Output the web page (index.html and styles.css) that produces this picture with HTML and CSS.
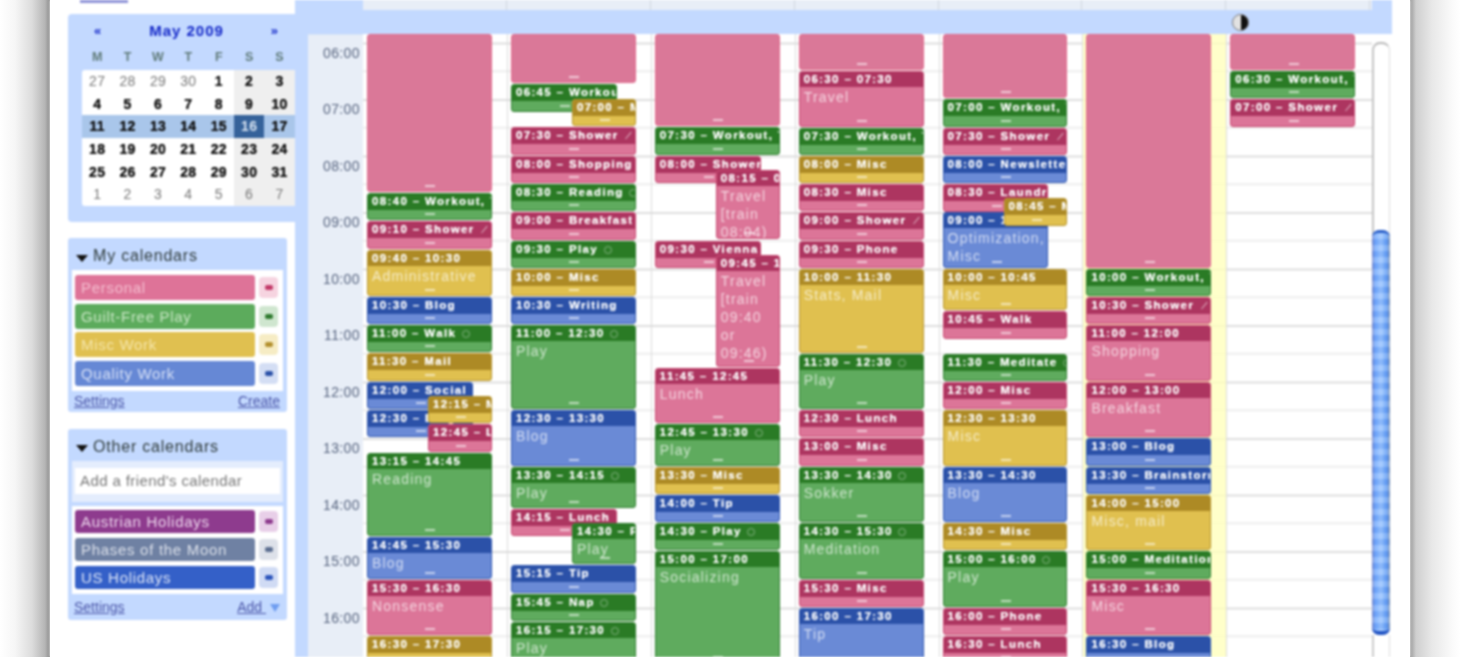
FILE: index.html
```html
<!DOCTYPE html>
<html lang="en">
<head>
<meta charset="utf-8">
<title>Calendar</title>
<link rel="stylesheet" href="styles.css">
</head>
<body>
<div class="page">
  <div class="shade-l"></div>
  <div class="window">
    <aside class="side">
      <div class="toplink"></div>
      <section class="mini">
        <div class="mini-head"><span class="arr">«</span><b>May 2009</b><span class="arr">»</span></div>
        <div class="mini-wd"><span>M</span><span>T</span><span>W</span><span>T</span><span>F</span><span>S</span><span>S</span></div>
        <div class="mini-days">
          <span class="o">27</span><span class="o">28</span><span class="o">29</span><span class="o">30</span><span>1</span><span class="we">2</span><span class="we">3</span>
          <span>4</span><span>5</span><span>6</span><span>7</span><span>8</span><span class="we">9</span><span class="we">10</span>
          <span class="wk">11</span><span class="wk">12</span><span class="wk">13</span><span class="wk">14</span><span class="wk">15</span><span class="sel">16</span><span class="wk">17</span>
          <span>18</span><span>19</span><span>20</span><span>21</span><span>22</span><span class="we">23</span><span class="we">24</span>
          <span>25</span><span>26</span><span>27</span><span>28</span><span>29</span><span class="we">30</span><span class="we">31</span>
          <span class="o">1</span><span class="o">2</span><span class="o">3</span><span class="o">4</span><span class="o">5</span><span class="o we">6</span><span class="o we">7</span>
        </div>
      </section>
      <section class="cals">
        <h3 class="cals-h"><i class="tri"></i>My calendars</h3>
        <ul class="cal-list">
          <li><span class="cal pink">Personal</span><span class="chip c-pink"></span></li>
          <li><span class="cal green">Guilt-Free Play</span><span class="chip c-green"></span></li>
          <li><span class="cal gold">Misc Work</span><span class="chip c-gold"></span></li>
          <li><span class="cal blue">Quality Work</span><span class="chip c-blue"></span></li>
        </ul>
        <div class="cals-f"><a>Settings</a><a>Create</a></div>
      </section>
      <section class="cals other">
        <h3 class="cals-h"><i class="tri"></i>Other calendars</h3>
        <div class="friend"><span>Add a friend's calendar</span></div>
        <ul class="cal-list">
          <li><span class="cal purple">Austrian Holidays</span><span class="chip c-purple"></span></li>
          <li><span class="cal slate">Phases of the Moon</span><span class="chip c-slate"></span></li>
          <li><span class="cal royal">US Holidays</span><span class="chip c-royal"></span></li>
        </ul>
        <div class="cals-f"><a>Settings</a><a class="add">Add <i class="tri-b"></i></a></div>
      </section>
    </aside>
    <main class="main">
      <div class="head-row"><div></div><div></div><div></div><div></div><div></div><div></div><div></div></div>
      <div class="allday"><div></div><div></div><div></div><div></div><div></div><div></div><div class="moon-cell"><i class="moon"></i></div></div>
      <div class="grid">
        <div class="times">
          <div>06:00</div><div>07:00</div><div>08:00</div><div>09:00</div><div>10:00</div><div>11:00</div><div>12:00</div><div>13:00</div><div>14:00</div><div>15:00</div><div>16:00</div>
        </div>
        <div class="cols">
          <div class="col">
            <div class="ev pink nohd" style="top:0;height:158px"></div>
            <div class="ev green" style="top:159px;height:27px"><p class="hd">08:40 – Workout, Y</p></div>
            <div class="ev pink" style="top:187px;height:28px"><p class="hd">09:10 – Shower <i class="pen"></i></p></div>
            <div class="ev gold" style="top:216px;height:46px"><p class="hd">09:40 – 10:30</p><p class="tt">Administrative</p></div>
            <div class="ev blue" style="top:263px;height:27px"><p class="hd">10:30 – Blog</p></div>
            <div class="ev green" style="top:291px;height:27px"><p class="hd">11:00 – Walk <i class="rep"></i></p></div>
            <div class="ev gold" style="top:319px;height:28px"><p class="hd">11:30 – Mail</p></div>
            <div class="ev blue lft" style="top:348px;height:27px"><p class="hd">12:00 – Social</p></div>
            <div class="ev blue lft" style="top:376px;height:27px"><p class="hd">12:30 – Blog</p></div>
            <div class="ev gold rgt" style="top:362px;height:27px"><p class="hd">12:15 – Misc</p></div>
            <div class="ev pink rgt" style="top:390px;height:28px"><p class="hd">12:45 – Lunch</p></div>
            <div class="ev green" style="top:419px;height:83px"><p class="hd">13:15 – 14:45</p><p class="tt">Reading</p></div>
            <div class="ev blue" style="top:503px;height:42px"><p class="hd">14:45 – 15:30</p><p class="tt">Blog</p></div>
            <div class="ev pink" style="top:546px;height:55px"><p class="hd">15:30 – 16:30</p><p class="tt">Nonsense</p></div>
            <div class="ev gold" style="top:602px;height:56px"><p class="hd">16:30 – 17:30</p></div>
          </div>
          <div class="col">
            <div class="ev pink nohd" style="top:0;height:49px"></div>
            <div class="ev green lft" style="top:50px;height:28px"><p class="hd">06:45 – Workout</p></div>
            <div class="ev gold rgt" style="top:65px;height:27px"><p class="hd">07:00 – Mail</p></div>
            <div class="ev pink" style="top:93px;height:28px"><p class="hd">07:30 – Shower <i class="pen"></i></p></div>
            <div class="ev pink" style="top:122px;height:27px"><p class="hd">08:00 – Shopping</p></div>
            <div class="ev green" style="top:150px;height:27px"><p class="hd">08:30 – Reading <i class="rep"></i></p></div>
            <div class="ev pink" style="top:178px;height:28px"><p class="hd">09:00 – Breakfast</p></div>
            <div class="ev green" style="top:207px;height:27px"><p class="hd">09:30 – Play <i class="rep"></i></p></div>
            <div class="ev gold" style="top:235px;height:27px"><p class="hd">10:00 – Misc</p></div>
            <div class="ev blue" style="top:263px;height:27px"><p class="hd">10:30 – Writing</p></div>
            <div class="ev green" style="top:291px;height:84px"><p class="hd">11:00 – 12:30 <i class="rep"></i></p><p class="tt">Play</p></div>
            <div class="ev blue" style="top:376px;height:56px"><p class="hd">12:30 – 13:30</p><p class="tt">Blog</p></div>
            <div class="ev green" style="top:433px;height:41px"><p class="hd">13:30 – 14:15 <i class="rep"></i></p><p class="tt">Play</p></div>
            <div class="ev pink lft" style="top:475px;height:27px"><p class="hd">14:15 – Lunch</p></div>
            <div class="ev green rgt" style="top:489px;height:41px"><p class="hd">14:30 – Play</p><p class="tt">Play</p></div>
            <div class="ev blue" style="top:531px;height:28px"><p class="hd">15:15 – Tip</p></div>
            <div class="ev green" style="top:560px;height:27px"><p class="hd">15:45 – Nap <i class="rep"></i></p></div>
            <div class="ev green" style="top:588px;height:70px"><p class="hd">16:15 – 17:30 <i class="rep"></i></p><p class="tt">Play</p></div>
          </div>
          <div class="col">
            <div class="ev pink nohd" style="top:0;height:92px"></div>
            <div class="ev green" style="top:93px;height:28px"><p class="hd">07:30 – Workout, Y</p></div>
            <div class="ev pink lft" style="top:122px;height:27px"><p class="hd">08:00 – Shower</p></div>
            <div class="ev pink rgt" style="top:136px;height:69px"><p class="hd">08:15 – 09:30</p><p class="tt">Travel<br>[train<br>08:04)</p></div>
            <div class="ev pink lft" style="top:207px;height:27px"><p class="hd">09:30 – Vienna</p></div>
            <div class="ev pink rgt" style="top:221px;height:112px"><p class="hd">09:45 – 11:45</p><p class="tt">Travel<br>[train<br>09:40<br>or<br>09:46)</p></div>
            <div class="ev pink" style="top:334px;height:55px"><p class="hd">11:45 – 12:45</p><p class="tt">Lunch</p></div>
            <div class="ev green" style="top:390px;height:42px"><p class="hd">12:45 – 13:30 <i class="rep"></i></p><p class="tt">Play</p></div>
            <div class="ev gold" style="top:433px;height:27px"><p class="hd">13:30 – Misc</p></div>
            <div class="ev blue" style="top:461px;height:27px"><p class="hd">14:00 – Tip</p></div>
            <div class="ev green" style="top:489px;height:27px"><p class="hd">14:30 – Play <i class="rep"></i></p></div>
            <div class="ev green" style="top:517px;height:112px"><p class="hd">15:00 – 17:00</p><p class="tt">Socializing</p></div>
          </div>
          <div class="col">
            <div class="ev pink nohd" style="top:0;height:36px"></div>
            <div class="ev pink" style="top:37px;height:56px"><p class="hd">06:30 – 07:30</p><p class="tt">Travel</p></div>
            <div class="ev green" style="top:94px;height:27px"><p class="hd">07:30 – Workout, Y</p></div>
            <div class="ev gold" style="top:122px;height:27px"><p class="hd">08:00 – Misc</p></div>
            <div class="ev pink" style="top:150px;height:27px"><p class="hd">08:30 – Misc</p></div>
            <div class="ev pink" style="top:178px;height:28px"><p class="hd">09:00 – Shower <i class="pen"></i></p></div>
            <div class="ev pink" style="top:207px;height:27px"><p class="hd">09:30 – Phone</p></div>
            <div class="ev gold" style="top:235px;height:84px"><p class="hd">10:00 – 11:30</p><p class="tt">Stats, Mail</p></div>
            <div class="ev green" style="top:320px;height:55px"><p class="hd">11:30 – 12:30 <i class="rep"></i></p><p class="tt">Play</p></div>
            <div class="ev pink" style="top:376px;height:27px"><p class="hd">12:30 – Lunch</p></div>
            <div class="ev pink" style="top:404px;height:28px"><p class="hd">13:00 – Misc</p></div>
            <div class="ev green" style="top:433px;height:55px"><p class="hd">13:30 – 14:30 <i class="rep"></i></p><p class="tt">Sokker</p></div>
            <div class="ev green" style="top:489px;height:56px"><p class="hd">14:30 – 15:30 <i class="rep"></i></p><p class="tt">Meditation</p></div>
            <div class="ev pink" style="top:546px;height:27px"><p class="hd">15:30 – Misc</p></div>
            <div class="ev blue" style="top:574px;height:84px"><p class="hd">16:00 – 17:30</p><p class="tt">Tip</p></div>
          </div>
          <div class="col">
            <div class="ev pink nohd" style="top:0;height:64px"></div>
            <div class="ev green" style="top:65px;height:28px"><p class="hd">07:00 – Workout, Y</p></div>
            <div class="ev pink" style="top:94px;height:27px"><p class="hd">07:30 – Shower <i class="pen"></i></p></div>
            <div class="ev blue" style="top:122px;height:27px"><p class="hd">08:00 – Newsletter</p></div>
            <div class="ev pink lft" style="top:150px;height:28px"><p class="hd">08:30 – Laundry</p></div>
            <div class="ev blue lft" style="top:178px;height:56px"><p class="hd">09:00 – 10:00</p><p class="tt">Optimization,<br>Misc</p></div>
            <div class="ev gold rgt" style="top:164px;height:28px"><p class="hd">08:45 – Mail</p></div>
            <div class="ev gold" style="top:235px;height:41px"><p class="hd">10:00 – 10:45</p><p class="tt">Misc</p></div>
            <div class="ev pink" style="top:277px;height:28px"><p class="hd">10:45 – Walk</p></div>
            <div class="ev green" style="top:320px;height:27px"><p class="hd">11:30 – Meditate <i class="rep"></i></p></div>
            <div class="ev pink" style="top:348px;height:27px"><p class="hd">12:00 – Misc</p></div>
            <div class="ev gold" style="top:376px;height:56px"><p class="hd">12:30 – 13:30</p><p class="tt">Misc</p></div>
            <div class="ev blue" style="top:433px;height:55px"><p class="hd">13:30 – 14:30</p><p class="tt">Blog</p></div>
            <div class="ev gold" style="top:489px;height:27px"><p class="hd">14:30 – Misc</p></div>
            <div class="ev green" style="top:517px;height:56px"><p class="hd">15:00 – 16:00 <i class="rep"></i></p><p class="tt">Play</p></div>
            <div class="ev pink" style="top:574px;height:27px"><p class="hd">16:00 – Phone</p></div>
            <div class="ev pink" style="top:602px;height:27px"><p class="hd">16:30 – Lunch</p></div>
          </div>
          <div class="col today">
            <div class="ev pink nohd" style="top:0;height:234px"></div>
            <div class="ev green" style="top:235px;height:27px"><p class="hd">10:00 – Workout, Y</p></div>
            <div class="ev pink" style="top:263px;height:27px"><p class="hd">10:30 – Shower <i class="pen"></i></p></div>
            <div class="ev pink" style="top:291px;height:56px"><p class="hd">11:00 – 12:00</p><p class="tt">Shopping</p></div>
            <div class="ev pink" style="top:348px;height:55px"><p class="hd">12:00 – 13:00</p><p class="tt">Breakfast</p></div>
            <div class="ev blue" style="top:404px;height:28px"><p class="hd">13:00 – Blog</p></div>
            <div class="ev blue" style="top:433px;height:27px"><p class="hd">13:30 – Brainstorm</p></div>
            <div class="ev gold" style="top:461px;height:55px"><p class="hd">14:00 – 15:00</p><p class="tt">Misc, mail</p></div>
            <div class="ev green" style="top:517px;height:28px"><p class="hd">15:00 – Meditation</p></div>
            <div class="ev pink" style="top:546px;height:55px"><p class="hd">15:30 – 16:30</p><p class="tt">Misc</p></div>
            <div class="ev blue" style="top:602px;height:56px"><p class="hd">16:30 – Blog</p></div>
          </div>
          <div class="col">
            <div class="ev pink nohd" style="top:0;height:36px"></div>
            <div class="ev green" style="top:37px;height:27px"><p class="hd">06:30 – Workout, Y</p></div>
            <div class="ev pink" style="top:65px;height:28px"><p class="hd">07:00 – Shower <i class="pen"></i></p></div>
          </div>
        </div>
        <div class="scroll">
          <div class="scroll-cap"></div>
          <div class="scroll-thumb"></div>
          <div class="scroll-rest"></div>
        </div>
      </div>
    </main>
    <div class="gutter"></div>
  </div>
  <div class="shade-r"></div>
</div>
</body>
</html>
```
FILE: styles.css
```css
html, body { margin: 0; padding: 0; background: #fff; height: 100%; overflow: hidden; }
* { box-sizing: border-box; }
body { font-family: "Liberation Sans", Arial, sans-serif; }
p, h3, ul { margin: 0; padding: 0; list-style: none; }

.page { display: flex; width: 1460px; height: 657px; overflow: hidden; }
.shade-l { width: 50px; background: linear-gradient(to right, #fff 0, #f6f6f6 15px, #dcdcdc 32px, #b5b5b5 45px, #8c8c8c 50px); }
.shade-r { width: 50px; background: linear-gradient(to right, #9a9a9a 0, #cfcfcf 6px, #e8e8e8 22px, #fafafa 42px, #fff 50px); }
.window { width: 1360px; display: flex; background: #fff; filter: blur(1.05px); }

/* sidebar */
.side { width: 245px; flex: none; padding-left: 18px; }
.toplink { width: 48px; height: 3px; margin-left: 12px; background: #8f93d8; }
.mini { margin-top: 11px; height: 208px; background: #c3d9ff; border-radius: 4px 0 0 4px; padding: 7px 0 0 14px; }
.mini-head { display: flex; justify-content: space-between; align-items: center; height: 18px; padding: 0 16px 0 12px; color: #1428c8; font-size: 15px; letter-spacing: 1px; }
.mini-head .arr { font-weight: bold; font-size: 13px; }
.mini-wd { display: grid; grid-template-columns: repeat(7, 30.4px); margin-top: 9px; height: 18px; align-items: center; text-align: center; font-size: 12.5px; color: #5f7a78; font-weight: bold; }
.mini-days { display: grid; grid-template-columns: repeat(7, 30.4px); grid-auto-rows: 22.7px; margin-top: 4px; background: #fff; border-radius: 3px 0 0 3px; font-size: 14px; letter-spacing: .3px; font-weight: bold; color: #111; text-align: center; line-height: 22.7px; text-shadow: 0 0 .6px #000; }
.mini-days .o { color: #777; font-weight: normal; text-shadow: none; }
.mini-days .we { background: #efefef; }
.mini-days .wk { background: #a9c6ea; }
.mini-days .sel { background: #35629a; color: #d8e4f2; text-shadow: none; }

.cals { margin-top: 16px; width: 219px; background: #c3d9ff; border-radius: 3px; padding: 0 4px; }
.cals-h { display: flex; align-items: center; gap: 5px; height: 32px; padding: 4px 0 0 4px; font-size: 16px; letter-spacing: .8px; font-weight: normal; color: #2f3b3b; white-space: nowrap; }
.tri { width: 0; height: 0; border: 6px solid transparent; border-top: 7px solid #111; border-bottom: 0; margin-top: 4px; }
.cal-list { background: #fff; padding: 5px 3px; display: flex; flex-direction: column; gap: 3.5px; }
.cal-list li { display: flex; align-items: center; gap: 4px; height: 25px; }
.cal { flex: none; width: 180px; height: 25px; border-radius: 3px; font-size: 15px; line-height: 25px; padding-left: 6px; letter-spacing: .7px; white-space: nowrap; }
.cal.pink { background: #de7398; color: #f4bfd0; }
.cal.green { background: #5cab5c; color: #c8e6c4; }
.cal.gold { background: #e0c050; color: #f5e6ac; }
.cal.blue { background: #6688d5; color: #d6e0f6; }
.cal.purple { background: #8e3b8e; color: #ecd6ec; }
.cal.slate { background: #6f81a3; color: #dbe0ea; }
.cal.royal { background: #3460c8; color: #dde5f7; }
.chip { flex: none; width: 19px; height: 21px; border-radius: 4px; display: flex; align-items: center; justify-content: center; }
.chip::after { content: ""; width: 8px; height: 5px; border-radius: 2px; }
.c-pink { background: #f6d4e0; } .c-pink::after { background: #c23a68; }
.c-green { background: #cfe6cf; } .c-green::after { background: #2f7a2f; }
.c-gold { background: #f6ecc4; } .c-gold::after { background: #b3902d; }
.c-blue { background: #d4def4; } .c-blue::after { background: #2c52a8; }
.c-purple { background: #e8cfe8; } .c-purple::after { background: #8e3b8e; }
.c-slate { background: #dde1e9; } .c-slate::after { background: #5c6e90; }
.c-royal { background: #d0dbf4; } .c-royal::after { background: #2d56bc; }
.cals-f { display: flex; justify-content: space-between; align-items: center; height: 21px; padding: 0 3px 0 2px; font-size: 14px; color: #4a55a8; }
.cals-f a { text-decoration: underline; }
.tri-b { display: inline-block; width: 0; height: 0; border: 5px solid transparent; border-top: 8px solid #6f9df0; border-bottom: 0; margin-left: 4px; }
.other { height: 191px; background: #c3d9ff; margin-top: 17px; }
.friend { background: #e4edfd; padding: 7px 3px; height: 41px; }
.friend span { display: block; background: #fff; height: 26px; line-height: 26px; padding-left: 5px; font-size: 15px; letter-spacing: .4px; color: #777; white-space: nowrap; }
.other .cal-list { margin-top: 4px; padding: 4px 3px 5px; gap: 5px; }
.other .cal-list li, .other .cal { height: 23px; line-height: 23px; }
.other .cals-f { height: 24px; margin-top: 1px; }

/* main */
.main { width: 1097px; flex: none; background: #c3d9ff; display: flex; flex-direction: column; height: 657px; overflow: hidden; }
.head-row, .allday { display: grid; grid-template-columns: repeat(7, 143.9px); width: 1009px; margin: 0 20px 0 68px; flex: none; }
.head-row { height: 10px; background: #e8eef7; }
.head-row div { border-right: 1px solid #d0d6de; }
.allday { height: 24px; }
.moon-cell { display: flex; align-items: center; padding-left: 6px; }
.moon { width: 17px; height: 17px; border-radius: 50%; background: linear-gradient(to right, #e2e2e2 0 50%, #111 50%); border: 1px solid #777; }
.grid { flex: 1; margin-left: 13px; display: flex; background: #fff; min-height: 0; }
.times { width: 55px; flex: none; background: #e8eef7; padding-top: 8.5px; border-top: 1px solid #d8e4f4; }
.times div { height: 56.5px; line-height: 19px; text-align: right; padding-right: 3px; font-size: 14px; letter-spacing: .4px; color: #56637e; }
.cols { width: 1009px; flex: none; display: grid; grid-template-columns: repeat(7, 143.9px); overflow: hidden; background-image: linear-gradient(#dedede 0 1.5px, transparent 1.5px 28.25px, #ededed 28.25px 29.25px, transparent 29.25px); background-size: 100% 56.5px; background-position: 0 8.5px; }
.col { position: relative; border-left: 1px solid #dcdcdc; }
.col:first-child { border-left: 0; }
.col:first-child .ev { left: 4px; }
.col:first-child .ev.rgt { left: 65px; }
.today { background: rgba(255, 255, 190, .82); }

.ev { position: absolute; left: 3px; right: 15px; border: 1px solid; border-radius: 3px; overflow: hidden; color: #fff; }
.ev::after { content: ""; position: absolute; left: calc(50% - 4px); bottom: 4px; width: 10px; height: 2px; background: rgba(255,255,255,.6); }
.ev.lft { right: 34px; }
.ev.rgt { left: 64px; }
.hd { height: 15px; line-height: 14px; padding: 0 0 0 4px; font-size: 11.5px; font-weight: bold; letter-spacing: 1.35px; white-space: nowrap; overflow: hidden; text-shadow: 0 0 .5px #fff; }
.hd:only-child { height: 16px; line-height: 15px; }
.tt { font-size: 14px; line-height: 18px; padding: 1px 0 0 4px; letter-spacing: 1.2px; opacity: .7; white-space: nowrap; }
.pink { background: #dc7598; border-color: #c8466f; }
.pink .hd { background: #ad3560; }
.green { background: #5fab5e; border-color: #2f7f2f; }
.green .hd { background: #2a7b25; }
.gold { background: #e0c04f; border-color: #b6932c; }
.gold .hd { background: #ad8a25; }
.blue { background: #6a8ad6; border-color: #2f57b0; }
.blue .hd { background: #2b51a8; }
.pink.nohd { border-color: #e26a8c; background: #da7898; }
.pen { display: inline-block; width: 9px; height: 1.4px; background: rgba(255,255,255,.6); transform: rotate(-50deg); vertical-align: middle; margin-left: 1px; }
.rep { display: inline-block; width: 8px; height: 8px; border: 1px solid rgba(255,255,255,.4); border-radius: 50%; vertical-align: middle; margin-left: 1px; }

/* scrollbar */
.scroll { width: 20px; flex: none; display: flex; flex-direction: column; background: #fff; }
.scroll-cap { height: 196px; border-left: 2px solid #c4c4c4; border-right: 1px solid #ddd; width: 18px; margin-top: 8px; border-top: 2px solid #b9b9b9; border-radius: 8px 8px 0 0; margin-bottom: -8px; }
.scroll-thumb { width: 18px; height: 405px; flex: none; border-radius: 7px; background: repeating-linear-gradient(to bottom, rgba(255,255,255,.16) 0 6px, rgba(0,50,180,.07) 6px 12px), linear-gradient(to right, #7c86c4 0, #6fa8ff 3px, #9cc6ff 9px, #5e9bf5 15px, #8a96a8 18px); border-top: 3px solid #2a5fc8; border-bottom: 4px solid #2456c4; }
.scroll-rest { flex: 1; width: 18px; border-left: 2px solid #ccc; border-right: 1px solid #ddd; }
.gutter { width: 18px; flex: none; background: #fff; }
```
